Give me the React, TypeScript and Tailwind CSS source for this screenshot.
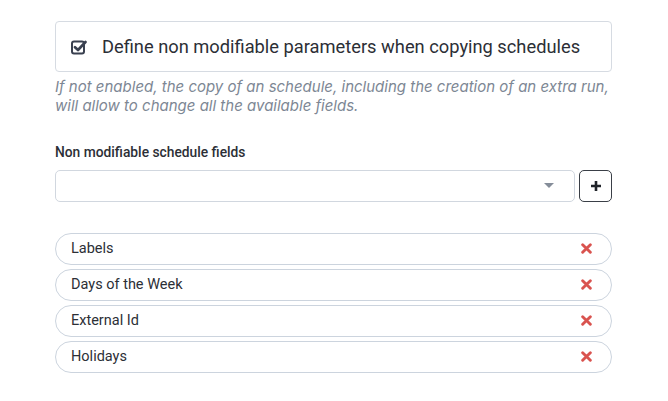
const fields = ['Labels', 'Days of the Week', 'External Id', 'Holidays'];

const CheckIcon = () => (
  <svg width="16" height="16" viewBox="0 0 16 16" fill="none">
    <rect x="1" y="2.5" width="12" height="12" rx="2" stroke="#3a4150" strokeWidth="2" />
    <path d="M4 8.2 L7 11 L14.5 3" stroke="#3a4150" strokeWidth="2.6" strokeLinecap="round" strokeLinejoin="round" />
  </svg>
);

const CrossIcon = () => (
  <svg width="11" height="11" viewBox="0 0 10 10">
    <path d="M1.5 1.5 L8.5 8.5 M8.5 1.5 L1.5 8.5" stroke="#d9534f" strokeWidth="2.6" strokeLinecap="round" />
  </svg>
);

export default function App() {
  return (
    <div className="w-[668px] h-[401px] bg-white pl-[55px] pr-[56px] pt-[21px] font-['Roboto',sans-serif] text-[#2c2f36]">
      <label className="flex items-center gap-[15px] h-[51px] px-[15px] border border-[#d6dbe2] rounded-[4px]">
        <CheckIcon />
        <span className="text-[18.3px]">Define non modifiable parameters when copying schedules</span>
      </label>
      <p className="mt-[5px] font-['Inter',sans-serif] text-[15px] leading-[19px] italic text-[#7d8794]">
        If not enabled, the copy of an schedule, including the creation of an extra run, will allow to change all the available fields.
      </p>

      <div className="mt-[27px] text-[13.8px] font-medium">Non modifiable schedule fields</div>
      <div className="mt-[7px] flex gap-[4px]">
        <div className="flex-1 h-[32px] border border-[#d1d7df] rounded-[5px] flex items-center justify-end pr-[20px]">
          <div className="w-0 h-0 border-l-[5px] border-r-[5px] border-t-[5px] border-l-transparent border-r-transparent border-t-[#858d99]" />
        </div>
        <button className="w-[33px] h-[32px] border border-[#3a3f47] rounded-[5px] flex items-center justify-center">
          <svg width="12" height="12" viewBox="0 0 12 12">
            <path d="M6 1 V11 M1 6 H11" stroke="#1f2329" strokeWidth="2.6" />
          </svg>
        </button>
      </div>

      <div className="mt-[31px] flex flex-col gap-[4px]">
        {fields.map((f) => (
          <div key={f} className="h-[32px] border border-[#ccd4de] rounded-full flex items-center justify-between pl-[15px] pr-[19px]">
            <span className="text-[14.5px]">{f}</span>
            <CrossIcon />
          </div>
        ))}
      </div>
    </div>
  );
}
